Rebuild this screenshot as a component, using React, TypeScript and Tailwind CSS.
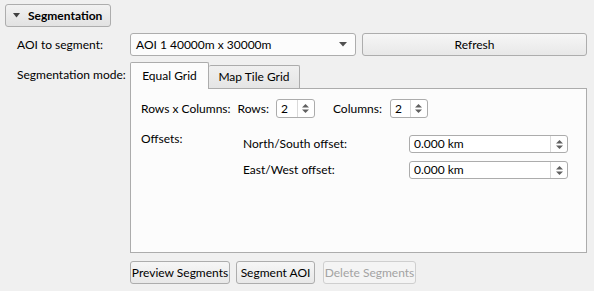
import React from "react";

const font = { fontFamily: 'Lato, "Noto Sans", Arial, sans-serif' };

function SpinArrows() {
  return (
    <div className="flex w-[17px] items-center justify-center border-l border-[#dadada] self-stretch">
      <svg width="9" height="11" viewBox="0 0 9 11">
        <path d="M1 4.5 L4.5 1 L8 4.5 Z" fill="#606060" />
        <path d="M1 6.5 L4.5 10 L8 6.5 Z" fill="#606060" />
      </svg>
    </div>
  );
}

function SpinBox({ value, w, h }: { value: string; w: string; h: string }) {
  return (
    <div className={`flex ${w} ${h} items-stretch rounded-[3px] border border-[#acacac] bg-white`}>
      <div className="flex flex-1 items-center pl-[4px] text-[12px] text-black">{value}</div>
      <SpinArrows />
    </div>
  );
}

function Btn({ children, w, disabled }: { children: React.ReactNode; w: string; disabled?: boolean }) {
  return (
    <div
      className={`flex ${w} h-[23px] items-center justify-center whitespace-nowrap rounded-[3px] border text-[12px] ${
        disabled
          ? "border-[#cfcfcf] bg-[#f4f4f4] text-[#a3a3a3]"
          : "border-[#adadad] bg-gradient-to-b from-[#f6f6f6] to-[#e8e8e8] text-black"
      }`}
    >
      {children}
    </div>
  );
}

export default function App() {
  return (
    <div className="h-[291px] w-[594px] overflow-hidden whitespace-nowrap bg-[#f0f0f0] text-[12px] text-black" style={font}>
      <div className="pl-[5px] pt-[4px]">
        <div className="flex h-[23px] w-[106px] items-center rounded-[3px] border border-[#adadad] bg-gradient-to-b from-[#f2f2f2] to-[#e2e2e2] pl-[7px]">
          <svg width="7" height="5" viewBox="0 0 7 5" className="mr-[8px]">
            <path d="M0 0 L7 0 L3.5 4.5 Z" fill="#404040" />
          </svg>
          <span className="font-bold">Segmentation</span>
        </div>
      </div>

      <div className="mt-[6px] flex">
        <div className="w-[130px] pl-[17px]">
          <div className="flex h-[23px] items-center">AOI to segment:</div>
          <div className="mt-[6px] flex h-[26px] items-center">Segmentation mode:</div>
        </div>
        <div className="w-[457px]">
          <div className="flex h-[23px] gap-[6px]">
            <div className="flex w-[226px] items-center justify-between rounded-[3px] border border-[#adadad] bg-[#fcfcfc] pl-[5px] pr-[8px]">
              <span>AOI 1 40000m x 30000m</span>
              <svg width="8" height="5" viewBox="0 0 8 5">
                <path d="M0 0 L8 0 L4 4.5 Z" fill="#505050" />
              </svg>
            </div>
            <div className="flex-1">
              <Btn w="w-full">Refresh</Btn>
            </div>
          </div>

          <div className="mt-[6px] flex h-[26px] items-end">
            <div className="relative z-10 -mb-[1px] flex h-[27px] w-[79px] items-center justify-center rounded-t-[2px] border border-b-0 border-[#acacac] bg-[#fcfcfc]">
              Equal Grid
            </div>
            <div className="flex h-[23px] w-[91px] items-center justify-center rounded-t-[2px] border border-l-0 border-b-0 border-[#acacac] bg-gradient-to-b from-[#f0f0f0] to-[#e5e5e5]">
              Map Tile Grid
            </div>
          </div>

          <div className="h-[165px] border border-[#acacac] bg-[#fcfcfc] px-[10px] pt-[10px]">
            <div className="flex h-[19px] items-center">
              <span>Rows x Columns:</span>
              <span className="ml-[7px]">Rows:</span>
              <div className="ml-[7px]">
                <SpinBox value="2" w="w-[39px]" h="h-[19px]" />
              </div>
              <span className="ml-[18px]">Columns:</span>
              <div className="ml-[8px]">
                <SpinBox value="2" w="w-[38px]" h="h-[19px]" />
              </div>
            </div>
            <div className="mt-[13px] flex">
              <div className="w-[102px] leading-[16px]">Offsets:</div>
              <div className="flex flex-1 flex-col gap-[8px] pt-[4px]">
                <div className="flex h-[18px] items-center">
                  <span className="w-[166px]">North/South offset:</span>
                  <SpinBox value="0.000 km" w="w-[159px]" h="h-[18px]" />
                </div>
                <div className="flex h-[18px] items-center">
                  <span className="w-[166px]">East/West offset:</span>
                  <SpinBox value="0.000 km" w="w-[159px]" h="h-[18px]" />
                </div>
              </div>
            </div>
          </div>

          <div className="mt-[8px] flex gap-[6px]">
            <Btn w="w-[100px]">Preview Segments</Btn>
            <Btn w="w-[79px]">Segment AOI</Btn>
            <div className="ml-[2px]">
              <Btn w="w-[93px]" disabled>
                Delete Segments
              </Btn>
            </div>
          </div>
        </div>
      </div>
    </div>
  );
}
